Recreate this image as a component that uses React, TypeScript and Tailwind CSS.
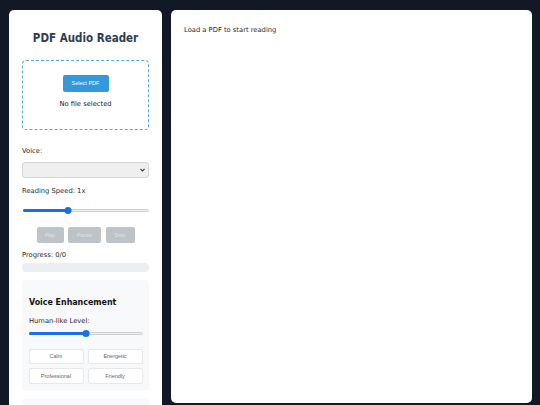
import { Fragment } from "react";

const UI_FONT = "font-['DejaVu_Sans',sans-serif]";
const HEAD_FONT = "font-['DejaVu_Sans_Condensed','DejaVu_Sans',sans-serif]";
const BTN_FONT = "font-['Liberation_Sans',Arial,sans-serif]";

function Slider({ value }: { value: number }) {
  // value is 0..1
  return (
    <div className="relative h-[7px] w-full">
      <div className="absolute left-0 right-0 top-[2px] h-[3px] rounded-full border border-[#cfcfcf] bg-[#efefef]" />
      <div
        className="absolute left-0 top-[2px] h-[3px] rounded-full bg-[#1a6fe3]"
        style={{ width: `${value * 100}%` }}
      />
      <div
        className="absolute top-0 h-[7px] w-[7px] -translate-x-1/2 rounded-full bg-[#1a6fe3]"
        style={{ left: `${value * 100}%` }}
      />
    </div>
  );
}

const PRESETS = ["Calm", "Energetic", "Professional", "Friendly"];

export default function App() {
  return (
    <div className={`flex min-h-screen items-start gap-[9px] bg-[#121826] pl-[9px] pt-[9.5px] ${UI_FONT}`}>
      {/* Sidebar */}
      <aside className="flex w-[153px] shrink-0 flex-col rounded-[5px] bg-white px-[13px] pt-[21.5px] pb-[20px]">
        <h1 className={`text-center text-[11.5px] font-bold leading-[14px] text-[#2c3e50] ${HEAD_FONT}`}>
          PDF Audio Reader
        </h1>

        <div className="mt-[15px] flex h-[70px] flex-col items-center rounded-[4px] border border-dashed border-[#5aa5dc] pt-[14px]">
          <button className={`h-[17px] w-[46px] rounded-[2px] bg-[#3498db] text-[5.5px] text-white ${BTN_FONT}`}>
            Select PDF
          </button>
          <p className="mt-[7px] text-[6.75px] leading-[10px] text-[#1a1a1a]">No file selected</p>
        </div>

        <label className="mt-[15.5px] text-[6.75px] leading-[10px] text-[#2a2a2a]">Voice:</label>
        <div className="mt-[6.5px] flex h-[16px] items-center justify-end rounded-[3px] border border-[#d6d6d6] bg-[#efefef] pr-[3px]">
          <svg width="5" height="4" viewBox="0 0 5 4">
            <path d="M0.5 0.8 L2.5 3 L4.5 0.8" fill="none" stroke="#333" strokeWidth="1.1" />
          </svg>
        </div>

        <label className="mt-[7.7px] text-[6.75px] leading-[10px] text-[#2a2a2a]">Reading Speed: 1x</label>
        <div className="mt-[11.5px] pl-[1px]">
          <Slider value={0.36} />
        </div>

        <div className={`mt-[12.8px] flex justify-center gap-[4.5px] ${BTN_FONT}`}>
          {[
            ["Play", "w-[27px]"],
            ["Pause", "w-[33px]"],
            ["Stop", "w-[29px]"],
          ].map(([t, w]) => (
            <Fragment key={t}>
              <button disabled className={`h-[16px] ${w} rounded-[2px] bg-[#bec3c7] text-[5.5px] text-[#dfe3e6]`}>
                {t}
              </button>
            </Fragment>
          ))}
        </div>

        <p className="mt-[7px] text-[6.75px] leading-[10px] text-[#2a2a2a]">Progress: 0/0</p>
        <div className="mt-[3.4px] h-[8.5px] rounded-full bg-[#eceff1]" />

        {/* Voice enhancement */}
        <section className="mt-[7.7px] rounded-[4px] bg-[#f8f9fa] px-[6.5px] pt-[16.3px] pb-[7.7px]">
          <h3 className={`pl-[0.5px] text-[8.8px] font-bold leading-[12px] text-[#111] ${HEAD_FONT}`}>
            Voice Enhancement
          </h3>
          <p className="mt-[7.7px] pl-[0.5px] text-[6.75px] leading-[10px] text-[#2a2a2a]">Human-like Level:</p>
          <div className="mt-[4px] pl-[0.5px]">
            <Slider value={0.5} />
          </div>
          <div className={`mt-[12.3px] grid grid-cols-2 gap-[4px] ${BTN_FONT}`}>
            {PRESETS.map((p) => (
              <button
                key={p}
                className="h-[15.4px] rounded-[2px] border border-[#e6e8ea] bg-white text-[5.5px] text-[#666]"
              >
                {p}
              </button>
            ))}
          </div>
        </section>

        <section className="mt-[7.3px] h-[90px] rounded-[4px] bg-[#f8f9fa]" />
      </aside>

      {/* Reader */}
      <main className="h-[393px] w-[360.5px] shrink-0 rounded-[5px] bg-white px-[13px] pt-[15px]">
        <p className="text-[6.75px] leading-[10px] text-[#2a2a2a]">Load a PDF to start reading</p>
      </main>
    </div>
  );
}
